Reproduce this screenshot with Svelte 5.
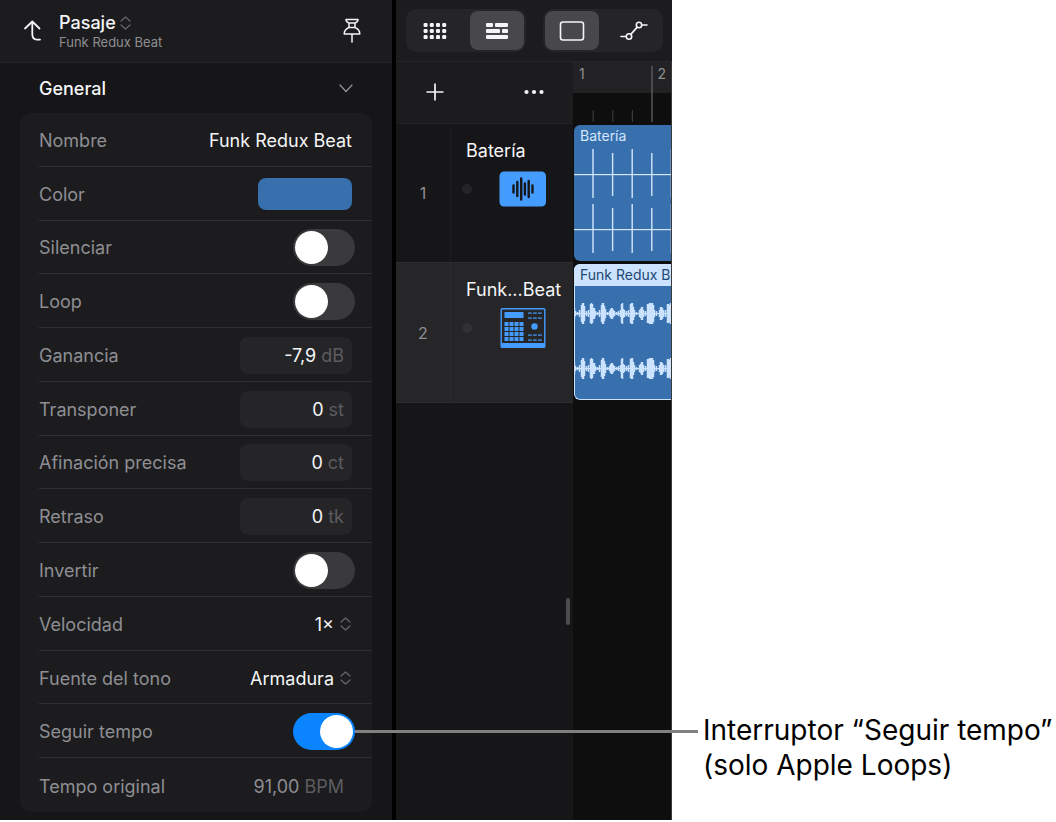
<script>
  const rows = [
    { id: 'nombre', label: 'Nombre', kind: 'text', value: 'Funk Redux Beat' },
    { id: 'color', label: 'Color', kind: 'color' },
    { id: 'silenciar', label: 'Silenciar', kind: 'toggle', on: false },
    { id: 'loop', label: 'Loop', kind: 'toggle', on: false },
    { id: 'ganancia', label: 'Ganancia', kind: 'number', value: '-7,9', unit: 'dB' },
    { id: 'transponer', label: 'Transponer', kind: 'number', value: '0', unit: 'st' },
    { id: 'afinacion', label: 'Afinación precisa', kind: 'number', value: '0', unit: 'ct' },
    { id: 'retraso', label: 'Retraso', kind: 'number', value: '0', unit: 'tk' },
    { id: 'invertir', label: 'Invertir', kind: 'toggle', on: false },
    { id: 'velocidad', label: 'Velocidad', kind: 'select', value: '1×' },
    { id: 'fuente', label: 'Fuente del tono', kind: 'select', value: 'Armadura' },
    { id: 'seguir', label: 'Seguir tempo', kind: 'toggle', on: true, callout: true },
    { id: 'tempo', label: 'Tempo original', kind: 'readonly', value: '91,00', unit: 'BPM' }
  ];

  const beats = Array.from({ length: 60 }, (_, i) => i + 1);
  const beatX = (n) => n * 19.6 - 0.6;

  // [x, half height] columns of the loop waveform, one cycle
  const columns = [
    [0, 5], [1, 2], [3, 1], [5, 3], [7, 8], [8, 10], [9, 10], [10, 7], [12, 2], [14, 3], [16, 9], [17, 10], [18, 9], [19, 5],
    [20, 5], [21, 2], [23, 1], [25, 3], [27, 8], [28, 10], [29, 10], [30, 7], [31, 4], [33, 1], [35, 2], [36, 4], [37, 5],
    [38, 5], [39, 3], [40, 2], [42, 1], [44, 2], [46, 3], [47, 9], [48, 10], [49, 4], [50, 3], [52, 2], [54, 3], [56, 9],
    [57, 10], [58, 10], [59, 6], [60, 3], [62, 1], [65, 3], [66, 4], [67, 6], [68, 6], [69, 3], [71, 2], [73, 9], [74, 9],
    [75, 10], [76, 10], [77, 10], [78, 10], [79, 8], [80, 3], [82, 2], [85, 3], [86, 6], [87, 6], [88, 5], [89, 3],
    [91, 3], [93, 9], [94, 9], [95, 8], [96, 10]
  ];
  const cycles = Array.from({ length: 12 }, (_, i) => i * 98);
  const loopWave = cycles
    .flatMap((o) => columns.flatMap(([x, h]) => [49, 104].map((c) => `M${o + x + 0.5} ${c - h}V${c + h + 1}`)))
    .join('');
  const grid4 = [0, 1, 2, 3];
  const grid3 = [0, 1, 2];
</script>

{#snippet updown()}
  <svg class="updown" width="11" height="14" viewBox="0 0 11 14" aria-hidden="true">
    <path d="M1 5 5.500 1 10 5M1 9 5.500 13 10 9" fill="none" stroke="currentColor" stroke-width="1.300" stroke-linecap="round" stroke-linejoin="round" />
  </svg>
{/snippet}

<main class="page">
  <section class="inspector">
    <header class="bar">
      <button class="plain" aria-label="Volver">
        <svg width="20" height="22" viewBox="0 0 20 22" fill="none" stroke="currentColor" stroke-width="1.800" stroke-linecap="round" stroke-linejoin="round">
          <path d="M2 8.500 9.300 1.500 16.500 8.500M9.300 2V14Q9.300 19.600 14 19.600H17" />
        </svg>
      </button>
      <div class="titles">
        <button class="plain title" aria-haspopup="true">Pasaje {@render updown()}</button>
        <span class="subtitle">Funk Redux Beat</span>
      </div>
      <button class="plain pin" aria-label="Fijar">
        <svg width="18" height="26" viewBox="0 0 18 26" fill="none" stroke="currentColor" stroke-width="1.500" stroke-linecap="round" stroke-linejoin="round">
          <path d="M3 1.500H15Q15 4 12 5V9.500Q16.800 11.500 16.800 16H1.200Q1.200 11.500 6 9.500V5Q3 4 3 1.500ZM6 5H12M6 9.500H12M9 16V24" />
        </svg>
      </button>
    </header>

    <button class="plain section">
      General
      <svg width="14" height="9" viewBox="0 0 14 9" fill="none" stroke="#8e8e93" stroke-width="1.300" stroke-linecap="round" stroke-linejoin="round" aria-hidden="true">
        <path d="M1 1 7 7.500 13 1" />
      </svg>
    </button>

    <div class="card">
      {#each rows as row (row.id)}
        <div class="row">
          <label for={row.id}>{row.label}</label>
          {#if row.kind === 'text'}
            <input id={row.id} class="name" type="text" value={row.value} />
          {:else if row.kind === 'color'}
            <button id={row.id} class="swatch" aria-label="Color"></button>
          {:else if row.kind === 'toggle'}
            <span class="toggle">
              <input id={row.id} type="checkbox" role="switch" checked={row.on} />
              {#if row.callout}<span class="leader"></span>{/if}
            </span>
          {:else if row.kind === 'number'}
            <span class="field"><input id={row.id} type="text" value={row.value} /><span class="unit">{row.unit}</span></span>
          {:else if row.kind === 'readonly'}
            <span class="field bare"><input id={row.id} type="text" value={row.value} readonly /><span class="unit">{row.unit}</span></span>
          {:else}
            <span class="picker">
              <select id={row.id}><option>{row.value}</option></select>
              {@render updown()}
            </span>
          {/if}
        </div>
      {/each}
    </div>
  </section>

  <section class="tracks">
    <nav class="bar tools">
      <div class="segments">
        <button aria-label="Cuadrícula">
          <svg width="24" height="18" viewBox="0 0 24 18" fill="currentColor">
            {#each grid3 as r}{#each grid4 as c}<rect x={c * 6.2 + 0.6} y={r * 6.1 + 0.9} width="4" height="4" rx="1.200" />{/each}{/each}
          </svg>
        </button>
        <button class="on" aria-label="Pistas">
          <svg width="24" height="18" viewBox="0 0 24 18" fill="currentColor">
            <rect x="1" y="1" width="7" height="4" rx="1" /><rect x="10" y="1" width="13" height="4" rx="1" />
            <rect x="1" y="7" width="14" height="4" rx="1" /><rect x="17" y="7" width="6" height="4" rx="1" />
            <rect x="1" y="13" width="22" height="4" rx="1" />
          </svg>
        </button>
      </div>
      <div class="segments">
        <button class="on" aria-label="Pasajes">
          <svg width="26" height="20" viewBox="0 0 26 20" fill="none" stroke="currentColor" stroke-width="1.600"><rect x="1.500" y="1" width="23" height="18" rx="2.500" /></svg>
        </button>
        <button aria-label="Automatización">
          <svg width="28" height="20" viewBox="0 0 28 20" fill="none" stroke="currentColor" stroke-width="1.600" stroke-linecap="round">
            <circle cx="9" cy="15.500" r="2.700" /><circle cx="19" cy="4" r="2.700" /><path d="M1 15.500H6.300M21.700 4H27M10.800 13.400 17.200 6.100" />
          </svg>
        </button>
      </div>
    </nav>

    <div class="headers">
      <div class="actions">
        <button class="plain" aria-label="Añadir pista">
          <svg width="18" height="18" viewBox="0 0 18 18" stroke="currentColor" stroke-width="1.700" stroke-linecap="round"><path d="M9 1.200V16.800M1.200 9H16.800" /></svg>
        </button>
        <button class="plain" aria-label="Más">
          <svg width="20" height="6" viewBox="0 0 20 6" fill="currentColor"><circle cx="2.500" cy="3" r="2.100" /><circle cx="10" cy="3" r="2.100" /><circle cx="17.500" cy="3" r="2.100" /></svg>
        </button>
      </div>
      <div class="track">
        <span class="number">1</span>
        <div class="info">
          <span class="trackname">Batería</span>
          <div class="strip">
            <span class="dot"></span>
            <svg width="48" height="40" viewBox="0 0 48 40" aria-hidden="true">
              <rect x="0.500" y="2.500" width="46.500" height="35" rx="4.500" fill="#459cff" />
              <path d="M14.500 16.500V23.500M18.300 13V27M22.200 9.500V30.500M25.900 14.500V25.500M29.700 12V28M33.500 16.500V23.500" stroke="#161618" stroke-width="2.400" stroke-linecap="round" />
            </svg>
          </div>
        </div>
      </div>
      <div class="track selected">
        <span class="number">2</span>
        <div class="info">
          <span class="trackname">Funk...Beat</span>
          <div class="strip">
            <span class="dot"></span>
            <svg width="48" height="40" viewBox="0 0 48 40" fill="#459cff" aria-hidden="true">
              <rect x="2.200" y="0.700" width="43.600" height="38.600" rx="1" fill="none" stroke="#459cff" stroke-width="1.400" />
              <rect x="2" y="35" width="44" height="4.500" />
              <rect x="5.500" y="4" width="19" height="6" />
              {#each grid4 as r}{#each grid4 as c}<rect x={5.5 + c * 5} y={14 + r * 5} width="4" height="4" />{/each}{/each}
              {#each [4.500, 9.500, 26.500, 31.500] as y}{#each grid3 as c}<rect x={29 + c * 5} {y} width="3.800" height="1.200" />{/each}{/each}
              <circle cx="35.500" cy="18.500" r="3.200" />
            </svg>
          </div>
        </div>
      </div>
      <div class="grip"></div>
    </div>

    <div class="timeline">
      <svg class="ruler" height="62" aria-hidden="true">
        <rect width="100%" height="31" fill="#222224" />
        {#each beats as n}
          <rect x={n * 19.6} y={n % 4 ? 48 : 4} width="1.200" height={n % 4 ? 12 : 56} fill={n % 4 ? '#39393b' : '#68686a'} />
        {/each}
        {#each [0, 1] as n}<text x={n * 78.5 + 6} y="17">{n + 1}</text>{/each}
      </svg>
      <div class="region">
        <span>Batería</span>
        <svg height="136" aria-hidden="true">
          <g fill="#d3e6fb">
            {#each [49, 104] as y}
              <rect {y} width="100%" height="1.200" />
              {#each beats as n}
                <rect x={beatX(n) - 0.7} y={y - (n % 2 ? 25 : 21)} width="1.400" height={n % 2 ? 49 : 43} />
              {/each}
            {/each}
          </g>
        </svg>
      </div>
      <div class="region active">
        <span>Funk Redux Beat</span>
        <svg height="136" aria-hidden="true">
          <rect y="49" width="100%" height="1.200" fill="#cbe3ff" />
          <rect y="104" width="100%" height="1.200" fill="#cbe3ff" />
          <path d={loopWave} stroke="#cbe3ff" stroke-width="1.500" />
        </svg>
      </div>
    </div>
  </section>

  <aside class="note">Interruptor “Seguir tempo”<br />(solo Apple Loops)</aside>
</main>

<style>
  :global(body) {
    margin: 0;
    background: #fff;
  }
  .page {
    display: grid;
    grid-template-columns: minmax(0, 33fr) minmax(0, 23fr) minmax(0, 32fr);
    box-sizing: border-box;
    min-height: 100vh;
    padding-bottom: 2px;
    overflow: hidden;
    font-family: Inter, sans-serif;
    font-size: 18px;
    color: #f5f5f7;
  }
  button,
  input,
  select {
    font: inherit;
    color: inherit;
    margin: 0;
    padding: 0;
    border: 0;
    background: none;
    appearance: none;
  }
  .plain {
    display: flex;
    align-items: center;
  }
  svg {
    display: block;
    flex: none;
  }
  .inspector {
    position: relative;
    z-index: 1;
    display: flex;
    flex-direction: column;
    background: #161618;
    border-right: 4px solid #000;
  }
  .bar {
    display: flex;
    align-items: center;
    box-sizing: border-box;
    height: 62px;
    background: #1c1c1e;
    border-bottom: 1px solid #262628;
  }
  .inspector .bar {
    height: 63px;
    padding: 0 31px 0 23px;
    gap: 16px;
  }
  .titles {
    flex: 1;
    display: flex;
    flex-direction: column;
    padding-top: 2px;
  }
  .title {
    gap: 4px;
    font-weight: 500;
    line-height: 20px;
  }
  .subtitle {
    font-size: 13px;
    line-height: 18px;
    color: #8e8e93;
  }
  .updown {
    color: #66666a;
  }
  .section {
    justify-content: space-between;
    height: 50px;
    padding: 0 39px;
    font-weight: 500;
  }
  .card {
    flex: 1;
    display: grid;
    grid-auto-rows: 1fr;
    margin: 0 20px 8px;
    padding-left: 19px;
    border-radius: 12px;
    background: #1c1c1e;
  }
  .row {
    display: flex;
    align-items: center;
    justify-content: space-between;
    min-height: 40px;
    padding: 2px 20px 0 0;
    box-sizing: border-box;
    border-bottom: 1px solid #303032;
  }
  .row:last-child {
    border-bottom: 0;
  }
  .row label {
    color: #8e8e93;
    white-space: nowrap;
  }
  .name {
    width: 160px;
    text-align: right;
  }
  .swatch {
    width: 94px;
    height: 32px;
    border-radius: 8px;
    background: #386fad;
  }
  .toggle {
    position: relative;
    margin-right: -3px;
  }
  .toggle input {
    display: flex;
    align-items: center;
    box-sizing: border-box;
    width: 62px;
    height: 37px;
    padding: 2px;
    border-radius: 19px;
    background: #3a3a3d;
  }
  .toggle input::before {
    content: '';
    width: 33px;
    height: 33px;
    border-radius: 50%;
    background: #fff;
  }
  .toggle input:checked {
    justify-content: flex-end;
    background: #0a84ff;
  }
  .leader {
    position: absolute;
    top: 17px;
    left: 100%;
    width: calc(100vw * 23 / 88 + 67px);
    height: 3px;
    background: #808080;
  }
  .field {
    display: flex;
    align-items: center;
    justify-content: flex-end;
    gap: 5px;
    box-sizing: border-box;
    width: 112px;
    height: 37px;
    padding: 0 8px;
    border-radius: 8px;
    background: #252528;
  }
  .field input {
    flex: 1;
    min-width: 0;
    text-align: right;
  }
  .unit {
    color: #5c5c60;
  }
  .bare {
    background: none;
    color: #8e8e93;
  }
  .picker {
    display: flex;
    align-items: center;
    gap: 6px;
    padding-right: 1px;
  }
  .picker select {
    width: 110px;
    text-align-last: right;
  }
  .tracks {
    display: grid;
    grid-template-columns: minmax(0, 59fr) minmax(0, 33fr);
    grid-template-rows: 62px 1fr;
    background: #161618;
  }
  .tools {
    grid-column: 1 / -1;
    padding: 0 9px 0 10px;
    justify-content: space-between;
  }
  .segments {
    display: flex;
    align-items: center;
    justify-content: space-between;
    gap: 8px;
    box-sizing: border-box;
    height: 43px;
    padding: 2px;
    border-radius: 10px;
    background: #252527;
  }
  .segments button {
    display: flex;
    align-items: center;
    justify-content: center;
    width: 54px;
    height: 39px;
    border-radius: 8px;
  }
  .segments .on {
    background: #48474c;
  }
  .headers {
    display: flex;
    flex-direction: column;
  }
  .actions {
    display: flex;
    align-items: center;
    justify-content: space-between;
    box-sizing: border-box;
    height: 62px;
    padding: 0 29px 2px 30px;
    background: #1c1c1e;
    border-bottom: 1px solid #222224;
  }
  .track {
    display: grid;
    grid-template-columns: 55px 1fr;
    box-sizing: border-box;
    height: 139px;
    border-bottom: 1px solid #2c2c2e;
  }
  .selected {
    height: 140px;
    background: #262628;
  }
  .number {
    display: flex;
    align-items: center;
    justify-content: center;
    font-size: 16px;
    color: #8e8e93;
    border-right: 1px solid #1d1d1f;
  }
  .selected .number {
    border-color: #2b2b2d;
  }
  .info {
    display: flex;
    flex-direction: column;
    gap: 7px;
    padding: 16px 0 0 15px;
  }
  .trackname {
    line-height: 22px;
    white-space: nowrap;
  }
  .strip {
    display: flex;
    align-items: center;
    gap: 26px;
    margin-left: -4px;
  }
  .dot {
    width: 10px;
    height: 10px;
    border-radius: 50%;
    background: #252527;
  }
  .strip svg {
    margin-left: 1px;
  }
  .selected .dot {
    background: #313133;
  }
  .grip {
    width: 4px;
    height: 27px;
    margin: auto 3px 195px auto;
    border-radius: 2px;
    background: #4c4c4e;
  }
  .timeline {
    overflow: hidden;
    background: #0e0e0e;
    border-right: 1px solid #3a3a3a;
  }
  .ruler {
    width: 100%;
    font-size: 14px;
    fill: #8e8e93;
  }
  .region {
    position: relative;
    height: 136px;
    margin: 1px 0 3px 1px;
    border-radius: 6px 0 0 6px;
    overflow: hidden;
    background: #386fad;
  }
  .region svg {
    width: 100%;
  }
  .region span {
    position: absolute;
    inset: 0 0 auto;
    padding-left: 6px;
    font-size: 14px;
    line-height: 22px;
    white-space: nowrap;
    color: #d3e6fb;
  }
  .active span {
    background: #cbe3ff;
    color: #1f4774;
  }
  .active::after {
    content: '';
    position: absolute;
    inset: 0;
    border: 1px solid #cbe3ff;
    border-right: 0;
    border-radius: 6px 0 0 6px;
  }
  .note {
    align-self: end;
    padding: 0 0 37px 31px;
    font-size: 28px;
    line-height: 35px;
    color: #000;
    white-space: nowrap;
  }
</style>
